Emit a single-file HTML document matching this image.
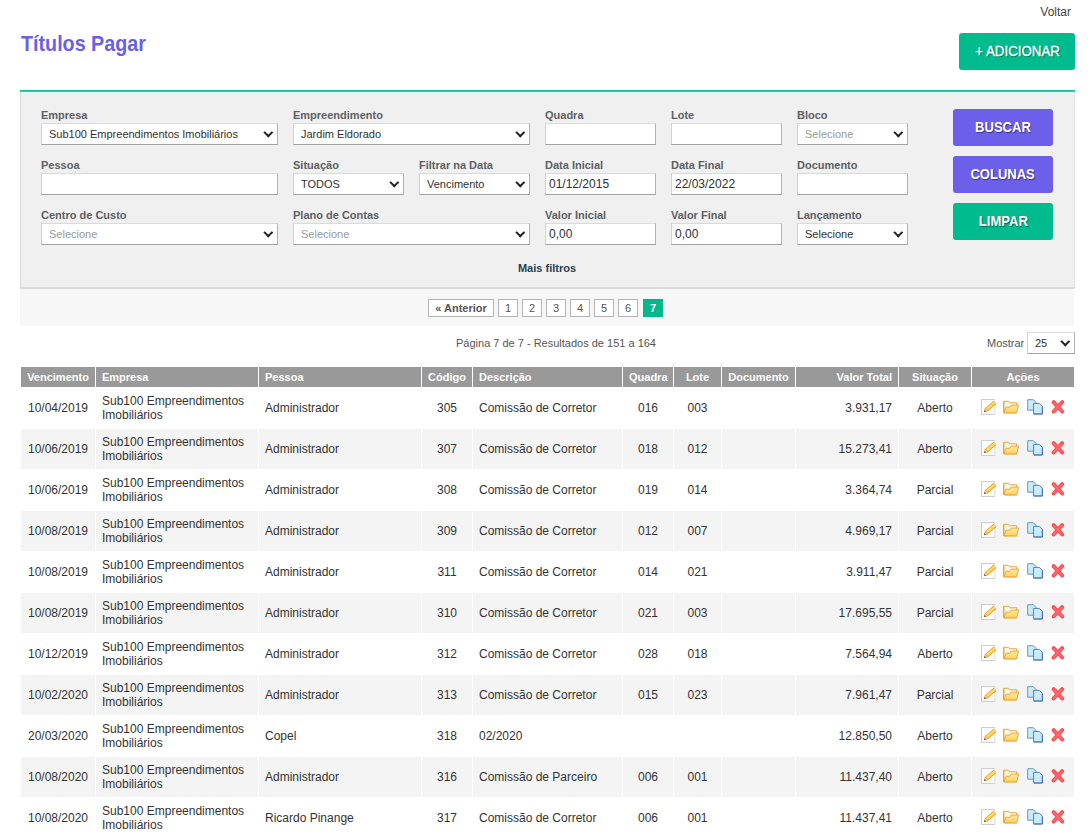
<!DOCTYPE html>
<html lang="pt-BR"><head><meta charset="utf-8"><title>Títulos Pagar</title>
<style>
*{box-sizing:border-box;margin:0;padding:0}
html,body{width:1092px;height:833px;overflow:hidden;background:#fff}
body{font-family:"Liberation Sans",sans-serif;font-size:12px;color:#333;position:relative}
.abs{position:absolute}
.voltar{position:absolute;right:21px;top:5px;font-size:12px;line-height:15px;color:#444}
h1{position:absolute;left:21.300px;top:32px;font-size:21.300px;line-height:24px;font-weight:bold;color:#6a5fe6;white-space:nowrap;transform:scaleX(.926);transform-origin:left center}
.btn{position:absolute;display:block;border-radius:3px;color:#fff;text-align:center;font-size:14px;font-weight:bold;text-shadow:1px 1px 1px rgba(0,0,0,.45);white-space:nowrap}
.btn span{display:inline-block;transform:scaleX(.93);transform-origin:center}
.btn.green{background:#00bb8d}
.btn.purple{background:#6c5fea}
.add{left:959px;top:33px;width:116px;height:37px;line-height:37px;padding-left:1px;font-weight:normal;-webkit-text-stroke:.35px #fff}
.add span{transform:scaleX(.95)}
.panel{position:absolute;left:20px;top:90px;width:1055px;height:199px;background:#f0f0f0;border-bottom:2px solid #dadada;border-right:1px solid #e2e2e2;border-left:1px solid #d8d8d8}
.panel::before{content:"";position:absolute;left:-1px;right:-1px;top:0;height:2px;background:linear-gradient(#00b392,#35dcc0)}
.lb{position:absolute;font-size:11px;font-weight:bold;color:#5c6064;line-height:13px;white-space:nowrap}
.fi{position:absolute;height:22px;background:#fff;border:1px solid #dadada;border-bottom-color:#a2a2a2;border-right-color:#b2b2b2;border-left-color:#d2d2d2;font-size:12px;line-height:20px;color:#303030;padding-left:3px;white-space:nowrap;overflow:hidden}
.fi.sel{padding-left:7px;font-size:11px}
.fi.ph{color:#999}
.fi.sel::after{content:"";box-sizing:border-box;position:absolute;right:5.700px;top:5.100px;width:6.600px;height:6.600px;border-right:2px solid #222;border-bottom:2px solid #222;transform:rotate(45deg) scale(1,1);transform-origin:center}
.mais{position:absolute;left:0;width:1054px;text-align:center;top:262px;font-size:11px;font-weight:bold;color:#2c3e50;line-height:13px}
.pagbar{position:absolute;left:20px;top:289px;width:1054px;height:37px;background:#f7f7f7}
.pg{position:absolute;top:10px;height:18px;border:1px solid #b4b4b4;background:#fff;font-size:11px;line-height:16px;text-align:center;color:#555}
.pg.b{font-weight:bold}
.pg.cur{background:#00b88a;border-color:#00b88a;color:#fff;font-weight:bold}
.info{position:absolute;left:20px;width:1072px;top:336px;text-align:center;font-size:11px;line-height:14px;color:#555}
.mostrar{position:absolute;left:987px;top:336px;font-size:11px;line-height:14px;color:#555}
.grid{position:absolute;left:20px;top:367px;width:1055px;height:470px;font-size:12px}
.hr{position:absolute;left:0;top:0;width:1055px;height:20px}
.th{position:absolute;top:0;height:20px;background:#999;color:#fff;font-weight:bold;font-size:11px;line-height:20px;padding:0 6px;white-space:nowrap;overflow:hidden}
.tr{position:absolute;left:0;width:1055px;height:40px}
.td{position:absolute;top:0;height:40px;padding:0 6px;display:flex;align-items:center;line-height:14px;color:#333}
.even .td{background:#f4f4f4}
.c{text-align:center;justify-content:center}
.r{text-align:right;justify-content:flex-end}
.l{text-align:left;justify-content:flex-start}
.td.acts{padding:0;display:block}
.ic{position:absolute;top:11px;width:16px;height:16px;overflow:visible}

</style></head>
<body>
<svg width="0" height="0" style="position:absolute">
<defs>
<linearGradient id="g-fold" x1="0" y1="0" x2="0" y2="1"><stop offset="0" stop-color="#ffeaa0"/><stop offset="1" stop-color="#ffd257"/></linearGradient>
<linearGradient id="g-page" x1="0" y1="0" x2="1" y2="1"><stop offset="0" stop-color="#d4f0fb"/><stop offset="1" stop-color="#bbe6f8"/></linearGradient>
<symbol id="i-edit" viewBox="0 0 16 16" overflow="visible">
<rect x=".5" y=".6" width="13.300" height="14.800" fill="#fff" stroke="#cbcbcb" stroke-width="1"/>
<path d="M13.800 .8V15.200" stroke="#fff" stroke-opacity=".5" stroke-width="1"/>
<path d="M5.700 10.500L13.900 3.400" stroke="#e8962a" stroke-width="4.200"/>
<path d="M5.700 10.500L13.900 3.400" stroke="#ffd24a" stroke-width="2.600"/>
<path d="M5.300 10L13.500 2.900" stroke="#fff1b0" stroke-width=".8"/>
<path d="M4.300 8.900L7.100 12.100L3.200 12.800Z" fill="#f8dca0" stroke="#d08a34" stroke-width=".6" stroke-linejoin="round"/>
<path d="M3.100 12.900L5 12.500L3.700 11Z" fill="#6a3c12"/>
</symbol>
<symbol id="i-folder" viewBox="0 0 16 16" overflow="visible">
<path d="M.7 13.800V2.300H5.600L6.500 3.800H13.700V6.500" fill="#fff9ea" stroke="#e9a23a" stroke-width="1" stroke-linejoin="round"/>
<path d="M.7 2.600V13.800" stroke="#f4a526" stroke-width="1.300"/>
<path d="M1 13.900L2.900 8.200H7L8.200 6.100H15.700L13.600 13.900Z" fill="url(#g-fold)" stroke="#e0a040" stroke-width=".9" stroke-linejoin="round"/>
<path d="M.8 14H13.600" stroke="#f5b544" stroke-width="1"/>
</symbol>
<symbol id="i-copy" viewBox="0 0 16 16" overflow="visible">
<path d="M.7 .7H6.300L9.100 3.500V11.200H.7Z" fill="url(#g-page)" stroke="#6b93c4" stroke-width="1" stroke-linejoin="round"/>
<path d="M6.600 4.400H12.400L15.400 7.400V15H6.600Z" fill="url(#g-page)" stroke="#5280c0" stroke-width="1" stroke-linejoin="round"/>
<path d="M15.400 7.600V15H6.800" fill="none" stroke="#4566b0" stroke-width=".8"/>
</symbol>
<symbol id="i-cross" viewBox="0 0 16 16" overflow="visible">
<path d="M3.600 3.200L12.200 12.500M12.200 3.200L3.600 12.500" stroke="#fb4b50" stroke-width="4" stroke-linecap="round"/>
<path d="M3.800 3.500L12 12.200M12 3.500L3.800 12.200" stroke="#ff6a6f" stroke-width="1.800" stroke-linecap="round"/>
</symbol>
</defs>
</svg>
<div class="voltar">Voltar</div>
<h1>Títulos Pagar</h1>
<div class="btn green add"><span>+ ADICIONAR</span></div>
<div class="panel"></div>
<div class="abs" style="left:20px;top:0;width:1055px;height:0">
<div class="lb" style="left:21px;top:109px">Empresa</div>
<div class="fi sel" style="left:21px;top:123px;width:237px">Sub100 Empreendimentos Imobiliários</div>
<div class="lb" style="left:273px;top:109px">Empreendimento</div>
<div class="fi sel" style="left:273px;top:123px;width:237px">Jardim Eldorado</div>
<div class="lb" style="left:525px;top:109px">Quadra</div>
<div class="fi" style="left:525px;top:123px;width:111px"></div>
<div class="lb" style="left:651px;top:109px">Lote</div>
<div class="fi" style="left:651px;top:123px;width:111px"></div>
<div class="lb" style="left:777px;top:109px">Bloco</div>
<div class="fi sel ph" style="left:777px;top:123px;width:111px">Selecione</div>

<div class="lb" style="left:21px;top:159px">Pessoa</div>
<div class="fi" style="left:21px;top:173px;width:237px"></div>
<div class="lb" style="left:273px;top:159px">Situação</div>
<div class="fi sel" style="left:273px;top:173px;width:111px">TODOS</div>
<div class="lb" style="left:399px;top:159px">Filtrar na Data</div>
<div class="fi sel" style="left:399px;top:173px;width:111px">Vencimento</div>
<div class="lb" style="left:525px;top:159px">Data Inicial</div>
<div class="fi" style="left:525px;top:173px;width:111px">01/12/2015</div>
<div class="lb" style="left:651px;top:159px">Data Final</div>
<div class="fi" style="left:651px;top:173px;width:111px">22/03/2022</div>
<div class="lb" style="left:777px;top:159px">Documento</div>
<div class="fi" style="left:777px;top:173px;width:111px"></div>

<div class="lb" style="left:21px;top:209px">Centro de Custo</div>
<div class="fi sel ph" style="left:21px;top:223px;width:237px">Selecione</div>
<div class="lb" style="left:273px;top:209px">Plano de Contas</div>
<div class="fi sel ph" style="left:273px;top:223px;width:237px">Selecione</div>
<div class="lb" style="left:525px;top:209px">Valor Inicial</div>
<div class="fi" style="left:525px;top:223px;width:111px">0,00</div>
<div class="lb" style="left:651px;top:209px">Valor Final</div>
<div class="fi" style="left:651px;top:223px;width:111px">0,00</div>
<div class="lb" style="left:777px;top:209px">Lançamento</div>
<div class="fi sel" style="left:777px;top:223px;width:111px">Selecione</div>
<div class="mais">Mais filtros</div>
<div class="btn purple" style="left:933px;top:109px;width:100px;height:37px;line-height:37px"><span>BUSCAR</span></div>
<div class="btn purple" style="left:933px;top:156px;width:100px;height:37px;line-height:37px"><span>COLUNAS</span></div>
<div class="btn green" style="left:933px;top:203px;width:100px;height:37px;line-height:37px"><span>LIMPAR</span></div>
</div>
<div class="pagbar">
<div class="pg b" style="left:408px;width:66px">« Anterior</div>
<div class="pg" style="left:478px;width:20px">1</div>
<div class="pg" style="left:502px;width:20px">2</div>
<div class="pg" style="left:526px;width:20px">3</div>
<div class="pg" style="left:550px;width:20px">4</div>
<div class="pg" style="left:574px;width:20px">5</div>
<div class="pg" style="left:598px;width:20px">6</div>
<div class="pg cur" style="left:623px;width:20px">7</div>
</div>
<div class="info">Página 7 de 7 - Resultados de 151 a 164</div>
<div class="mostrar">Mostrar</div>
<div class="fi sel" style="left:1027px;top:332px;width:48px;height:22px;font-size:11px">25</div>
<div class="grid">
<div class="hr"><div class="th c" style="left:1px;width:74px"><span>Vencimento</span></div><div class="th l" style="left:76px;width:162px"><span>Empresa</span></div><div class="th l" style="left:239px;width:162px"><span>Pessoa</span></div><div class="th c" style="left:402px;width:50px"><span>Código</span></div><div class="th l" style="left:453px;width:149px"><span>Descrição</span></div><div class="th c" style="left:603px;width:50px"><span>Quadra</span></div><div class="th c" style="left:654px;width:47px"><span>Lote</span></div><div class="th c" style="left:702px;width:73px"><span>Documento</span></div><div class="th r" style="left:776px;width:102px"><span>Valor Total</span></div><div class="th c" style="left:879px;width:72px"><span>Situação</span></div><div class="th c" style="left:952px;width:102px"><span>Ações</span></div></div>
<div class="tr odd" style="top:21px"><div class="td c" style="left:1px;width:74px"><span>10/04/2019</span></div><div class="td l" style="left:76px;width:162px"><span>Sub100 Empreendimentos Imobiliários</span></div><div class="td l" style="left:239px;width:162px"><span>Administrador</span></div><div class="td c" style="left:402px;width:50px"><span>305</span></div><div class="td l" style="left:453px;width:149px"><span>Comissão de Corretor</span></div><div class="td c" style="left:603px;width:50px"><span>016</span></div><div class="td c" style="left:654px;width:47px"><span>003</span></div><div class="td c" style="left:702px;width:73px"><span></span></div><div class="td r" style="left:776px;width:102px"><span>3.931,17</span></div><div class="td c" style="left:879px;width:72px"><span>Aberto</span></div><div class="td acts" style="left:952px;width:102px"><svg class="ic" style="left:9px"><use href="#i-edit"/></svg><svg class="ic" style="left:31px"><use href="#i-folder"/></svg><svg class="ic" style="left:55px"><use href="#i-copy"/></svg><svg class="ic" style="left:78px"><use href="#i-cross"/></svg></div></div>
<div class="tr even" style="top:62px"><div class="td c" style="left:1px;width:74px"><span>10/06/2019</span></div><div class="td l" style="left:76px;width:162px"><span>Sub100 Empreendimentos Imobiliários</span></div><div class="td l" style="left:239px;width:162px"><span>Administrador</span></div><div class="td c" style="left:402px;width:50px"><span>307</span></div><div class="td l" style="left:453px;width:149px"><span>Comissão de Corretor</span></div><div class="td c" style="left:603px;width:50px"><span>018</span></div><div class="td c" style="left:654px;width:47px"><span>012</span></div><div class="td c" style="left:702px;width:73px"><span></span></div><div class="td r" style="left:776px;width:102px"><span>15.273,41</span></div><div class="td c" style="left:879px;width:72px"><span>Aberto</span></div><div class="td acts" style="left:952px;width:102px"><svg class="ic" style="left:9px"><use href="#i-edit"/></svg><svg class="ic" style="left:31px"><use href="#i-folder"/></svg><svg class="ic" style="left:55px"><use href="#i-copy"/></svg><svg class="ic" style="left:78px"><use href="#i-cross"/></svg></div></div>
<div class="tr odd" style="top:103px"><div class="td c" style="left:1px;width:74px"><span>10/06/2019</span></div><div class="td l" style="left:76px;width:162px"><span>Sub100 Empreendimentos Imobiliários</span></div><div class="td l" style="left:239px;width:162px"><span>Administrador</span></div><div class="td c" style="left:402px;width:50px"><span>308</span></div><div class="td l" style="left:453px;width:149px"><span>Comissão de Corretor</span></div><div class="td c" style="left:603px;width:50px"><span>019</span></div><div class="td c" style="left:654px;width:47px"><span>014</span></div><div class="td c" style="left:702px;width:73px"><span></span></div><div class="td r" style="left:776px;width:102px"><span>3.364,74</span></div><div class="td c" style="left:879px;width:72px"><span>Parcial</span></div><div class="td acts" style="left:952px;width:102px"><svg class="ic" style="left:9px"><use href="#i-edit"/></svg><svg class="ic" style="left:31px"><use href="#i-folder"/></svg><svg class="ic" style="left:55px"><use href="#i-copy"/></svg><svg class="ic" style="left:78px"><use href="#i-cross"/></svg></div></div>
<div class="tr even" style="top:144px"><div class="td c" style="left:1px;width:74px"><span>10/08/2019</span></div><div class="td l" style="left:76px;width:162px"><span>Sub100 Empreendimentos Imobiliários</span></div><div class="td l" style="left:239px;width:162px"><span>Administrador</span></div><div class="td c" style="left:402px;width:50px"><span>309</span></div><div class="td l" style="left:453px;width:149px"><span>Comissão de Corretor</span></div><div class="td c" style="left:603px;width:50px"><span>012</span></div><div class="td c" style="left:654px;width:47px"><span>007</span></div><div class="td c" style="left:702px;width:73px"><span></span></div><div class="td r" style="left:776px;width:102px"><span>4.969,17</span></div><div class="td c" style="left:879px;width:72px"><span>Parcial</span></div><div class="td acts" style="left:952px;width:102px"><svg class="ic" style="left:9px"><use href="#i-edit"/></svg><svg class="ic" style="left:31px"><use href="#i-folder"/></svg><svg class="ic" style="left:55px"><use href="#i-copy"/></svg><svg class="ic" style="left:78px"><use href="#i-cross"/></svg></div></div>
<div class="tr odd" style="top:185px"><div class="td c" style="left:1px;width:74px"><span>10/08/2019</span></div><div class="td l" style="left:76px;width:162px"><span>Sub100 Empreendimentos Imobiliários</span></div><div class="td l" style="left:239px;width:162px"><span>Administrador</span></div><div class="td c" style="left:402px;width:50px"><span>311</span></div><div class="td l" style="left:453px;width:149px"><span>Comissão de Corretor</span></div><div class="td c" style="left:603px;width:50px"><span>014</span></div><div class="td c" style="left:654px;width:47px"><span>021</span></div><div class="td c" style="left:702px;width:73px"><span></span></div><div class="td r" style="left:776px;width:102px"><span>3.911,47</span></div><div class="td c" style="left:879px;width:72px"><span>Parcial</span></div><div class="td acts" style="left:952px;width:102px"><svg class="ic" style="left:9px"><use href="#i-edit"/></svg><svg class="ic" style="left:31px"><use href="#i-folder"/></svg><svg class="ic" style="left:55px"><use href="#i-copy"/></svg><svg class="ic" style="left:78px"><use href="#i-cross"/></svg></div></div>
<div class="tr even" style="top:226px"><div class="td c" style="left:1px;width:74px"><span>10/08/2019</span></div><div class="td l" style="left:76px;width:162px"><span>Sub100 Empreendimentos Imobiliários</span></div><div class="td l" style="left:239px;width:162px"><span>Administrador</span></div><div class="td c" style="left:402px;width:50px"><span>310</span></div><div class="td l" style="left:453px;width:149px"><span>Comissão de Corretor</span></div><div class="td c" style="left:603px;width:50px"><span>021</span></div><div class="td c" style="left:654px;width:47px"><span>003</span></div><div class="td c" style="left:702px;width:73px"><span></span></div><div class="td r" style="left:776px;width:102px"><span>17.695,55</span></div><div class="td c" style="left:879px;width:72px"><span>Parcial</span></div><div class="td acts" style="left:952px;width:102px"><svg class="ic" style="left:9px"><use href="#i-edit"/></svg><svg class="ic" style="left:31px"><use href="#i-folder"/></svg><svg class="ic" style="left:55px"><use href="#i-copy"/></svg><svg class="ic" style="left:78px"><use href="#i-cross"/></svg></div></div>
<div class="tr odd" style="top:267px"><div class="td c" style="left:1px;width:74px"><span>10/12/2019</span></div><div class="td l" style="left:76px;width:162px"><span>Sub100 Empreendimentos Imobiliários</span></div><div class="td l" style="left:239px;width:162px"><span>Administrador</span></div><div class="td c" style="left:402px;width:50px"><span>312</span></div><div class="td l" style="left:453px;width:149px"><span>Comissão de Corretor</span></div><div class="td c" style="left:603px;width:50px"><span>028</span></div><div class="td c" style="left:654px;width:47px"><span>018</span></div><div class="td c" style="left:702px;width:73px"><span></span></div><div class="td r" style="left:776px;width:102px"><span>7.564,94</span></div><div class="td c" style="left:879px;width:72px"><span>Aberto</span></div><div class="td acts" style="left:952px;width:102px"><svg class="ic" style="left:9px"><use href="#i-edit"/></svg><svg class="ic" style="left:31px"><use href="#i-folder"/></svg><svg class="ic" style="left:55px"><use href="#i-copy"/></svg><svg class="ic" style="left:78px"><use href="#i-cross"/></svg></div></div>
<div class="tr even" style="top:308px"><div class="td c" style="left:1px;width:74px"><span>10/02/2020</span></div><div class="td l" style="left:76px;width:162px"><span>Sub100 Empreendimentos Imobiliários</span></div><div class="td l" style="left:239px;width:162px"><span>Administrador</span></div><div class="td c" style="left:402px;width:50px"><span>313</span></div><div class="td l" style="left:453px;width:149px"><span>Comissão de Corretor</span></div><div class="td c" style="left:603px;width:50px"><span>015</span></div><div class="td c" style="left:654px;width:47px"><span>023</span></div><div class="td c" style="left:702px;width:73px"><span></span></div><div class="td r" style="left:776px;width:102px"><span>7.961,47</span></div><div class="td c" style="left:879px;width:72px"><span>Parcial</span></div><div class="td acts" style="left:952px;width:102px"><svg class="ic" style="left:9px"><use href="#i-edit"/></svg><svg class="ic" style="left:31px"><use href="#i-folder"/></svg><svg class="ic" style="left:55px"><use href="#i-copy"/></svg><svg class="ic" style="left:78px"><use href="#i-cross"/></svg></div></div>
<div class="tr odd" style="top:349px"><div class="td c" style="left:1px;width:74px"><span>20/03/2020</span></div><div class="td l" style="left:76px;width:162px"><span>Sub100 Empreendimentos Imobiliários</span></div><div class="td l" style="left:239px;width:162px"><span>Copel</span></div><div class="td c" style="left:402px;width:50px"><span>318</span></div><div class="td l" style="left:453px;width:149px"><span>02/2020</span></div><div class="td c" style="left:603px;width:50px"><span></span></div><div class="td c" style="left:654px;width:47px"><span></span></div><div class="td c" style="left:702px;width:73px"><span></span></div><div class="td r" style="left:776px;width:102px"><span>12.850,50</span></div><div class="td c" style="left:879px;width:72px"><span>Aberto</span></div><div class="td acts" style="left:952px;width:102px"><svg class="ic" style="left:9px"><use href="#i-edit"/></svg><svg class="ic" style="left:31px"><use href="#i-folder"/></svg><svg class="ic" style="left:55px"><use href="#i-copy"/></svg><svg class="ic" style="left:78px"><use href="#i-cross"/></svg></div></div>
<div class="tr even" style="top:390px"><div class="td c" style="left:1px;width:74px"><span>10/08/2020</span></div><div class="td l" style="left:76px;width:162px"><span>Sub100 Empreendimentos Imobiliários</span></div><div class="td l" style="left:239px;width:162px"><span>Administrador</span></div><div class="td c" style="left:402px;width:50px"><span>316</span></div><div class="td l" style="left:453px;width:149px"><span>Comissão de Parceiro</span></div><div class="td c" style="left:603px;width:50px"><span>006</span></div><div class="td c" style="left:654px;width:47px"><span>001</span></div><div class="td c" style="left:702px;width:73px"><span></span></div><div class="td r" style="left:776px;width:102px"><span>11.437,40</span></div><div class="td c" style="left:879px;width:72px"><span>Aberto</span></div><div class="td acts" style="left:952px;width:102px"><svg class="ic" style="left:9px"><use href="#i-edit"/></svg><svg class="ic" style="left:31px"><use href="#i-folder"/></svg><svg class="ic" style="left:55px"><use href="#i-copy"/></svg><svg class="ic" style="left:78px"><use href="#i-cross"/></svg></div></div>
<div class="tr odd" style="top:431px"><div class="td c" style="left:1px;width:74px"><span>10/08/2020</span></div><div class="td l" style="left:76px;width:162px"><span>Sub100 Empreendimentos Imobiliários</span></div><div class="td l" style="left:239px;width:162px"><span>Ricardo Pinange</span></div><div class="td c" style="left:402px;width:50px"><span>317</span></div><div class="td l" style="left:453px;width:149px"><span>Comissão de Corretor</span></div><div class="td c" style="left:603px;width:50px"><span>006</span></div><div class="td c" style="left:654px;width:47px"><span>001</span></div><div class="td c" style="left:702px;width:73px"><span></span></div><div class="td r" style="left:776px;width:102px"><span>11.437,41</span></div><div class="td c" style="left:879px;width:72px"><span>Aberto</span></div><div class="td acts" style="left:952px;width:102px"><svg class="ic" style="left:9px"><use href="#i-edit"/></svg><svg class="ic" style="left:31px"><use href="#i-folder"/></svg><svg class="ic" style="left:55px"><use href="#i-copy"/></svg><svg class="ic" style="left:78px"><use href="#i-cross"/></svg></div></div>
</div>
</body></html>
